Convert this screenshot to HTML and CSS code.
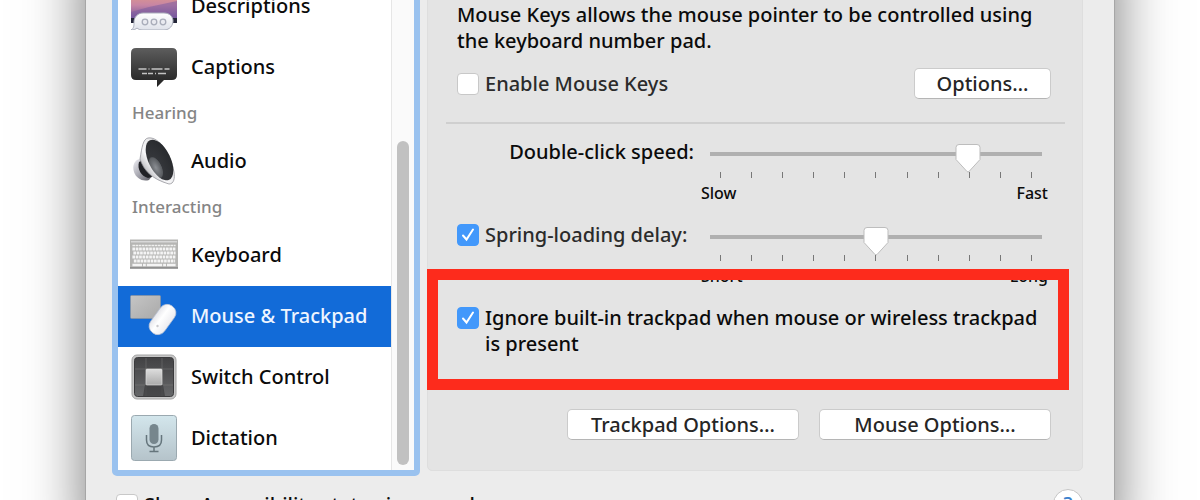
FILE: index.html
```html
<!DOCTYPE html>
<html lang="en">
<head>
<meta charset="utf-8">
<title>Accessibility</title>
<link rel="stylesheet" href="styles.css">
</head>
<body>
<main class="window">
  <div class="columns">
    <nav class="sidebar" aria-label="Accessibility features">
      <div class="list">
        <button class="item" type="button">
          <svg class="icon" viewBox="0 0 48 48" aria-hidden="true">
            <defs>
              <linearGradient id="sky" x1="0" y1="0" x2="0" y2="1"><stop offset="0" stop-color="#e9a07c"/><stop offset=".55" stop-color="#c886a4"/><stop offset="1" stop-color="#75569b"/></linearGradient>
              <linearGradient id="bubble" x1="0" y1="0" x2="0" y2="1"><stop offset="0" stop-color="#fff"/><stop offset="1" stop-color="#dfe2ea"/></linearGradient>
            </defs>
            <path d="M1 4h46v37H1z" fill="#242638"/>
            <path d="M1 7h46v29H1z" fill="url(#sky)"/>
            <path d="M1 30l18-5 28-6v17H1z" fill="#755aa0" opacity=".5"/>
            <path d="M13 32h21c6 0 9 4 9 8s-3 9-9 9H13c-3 0-5-1-6-2-1 1-3 2-6 2 3-2 3-4 3-8 0-5 4-9 9-9z" transform="translate(0 -1)" fill="url(#bubble)" stroke="#aaaebb"/>
            <g fill="#e9eaf0" stroke="#a9adba" stroke-width="1.3"><circle cx="15" cy="40" r="2.800"/><circle cx="24" cy="40" r="2.800"/><circle cx="33" cy="40" r="2.800"/></g>
          </svg>
          <span>Descriptions</span>
        </button>
        <button class="item" type="button">
          <svg class="icon" viewBox="0 0 48 48" aria-hidden="true">
            <defs><linearGradient id="dark" x1="0" y1="0" x2="0" y2="1"><stop offset="0" stop-color="#5d5d5d"/><stop offset="1" stop-color="#202020"/></linearGradient></defs>
            <path d="M6 5h36q5 0 5 5v22q0 5-5 5h-8l-7 7v-7H6q-5 0-5-5V10q0-5 5-5z" fill="url(#dark)"/>
            <path d="M8.500 26h8m2 0h1m2 0h11m2 0h5M12 30.500h5m1 0h5m2 0h1m2 0h8" stroke="#c4c4c4" stroke-width="1.400"/>
          </svg>
          <span>Captions</span>
        </button>
        <h2 class="group">Hearing</h2>
        <button class="item" type="button">
          <svg class="icon" viewBox="0 0 48 48" aria-hidden="true">
            <defs>
              <linearGradient id="rim" x1="0" y1="1" x2="1" y2="0"><stop offset="0" stop-color="#77777d"/><stop offset=".4" stop-color="#f8f8fa"/><stop offset="1" stop-color="#ccc"/></linearGradient>
              <linearGradient id="magnet" x1="0" y1="0" x2="1" y2="1"><stop offset="0" stop-color="#f0f0f5"/><stop offset=".5" stop-color="#a9a9b2"/><stop offset="1" stop-color="#55555d"/></linearGradient>
              <radialGradient id="cone" cx=".2" cy=".62" r=".8"><stop offset="0" stop-color="#8b8e93"/><stop offset=".3" stop-color="#5a5d61"/><stop offset=".34" stop-color="#34363a"/><stop offset="1" stop-color="#292b2e"/></radialGradient>
            </defs>
            <path d="M10 22C4 23 2 29 4 35s8 10 15 8l3-4z" fill="url(#magnet)"/>
            <path d="M9 25c-2 7 2 14 9 16l4-1-9-17z" fill="#202126"/>
            <path d="M18 1c-5 1-6 9-8 21 4 12 12 20 29 25 5 0 6-6 5-12C41 18 29-1 18 1z" fill="url(#rim)" stroke="#96969c" stroke-width=".8"/>
            <ellipse cx="29.500" cy="23" rx="11" ry="22" transform="rotate(-26 29.500 23)" fill="url(#cone)"/>
          </svg>
          <span>Audio</span>
        </button>
        <h2 class="group">Interacting</h2>
        <button class="item" type="button">
          <svg class="icon" viewBox="0 0 50 48" preserveAspectRatio="none" aria-hidden="true">
            <path d="M0 8.500h50V37H0z" fill="#b5b5b3"/>
            <path d="M0 37h50" stroke="#858585" stroke-width="1.500"/>
            <path d="M1 10h48v1.500H1z" fill="#d8d8d8"/>
            <path d="M2.500 14.500h45" stroke="#f0f0ee" stroke-width="1.600" stroke-dasharray="2.700 .6"/>
            <g stroke="#f4f4f4" stroke-width="2.800" stroke-dasharray="2.800 .7"><path d="M2.500 18h45M3.500 22h44M2.500 26h45M4 30h43"/></g>
            <path d="M2.500 34h10m1 0h3m1 0h16m1 0h3m1 0h9" stroke="#f4f4f4" stroke-width="2.600"/>
          </svg>
          <span>Keyboard</span>
        </button>
        <button class="item selected" type="button" aria-current="page">
          <svg class="icon" viewBox="0 0 48 48" aria-hidden="true">
            <defs>
              <linearGradient id="pad" x1="0" y1="0" x2="1" y2="1"><stop offset="0" stop-color="#c5c5c5"/><stop offset="1" stop-color="#a9a9a9"/></linearGradient>
              <linearGradient id="mouse" x1="0" y1="0" x2="1" y2="0"><stop offset="0" stop-color="#e6e6eb"/><stop offset=".4" stop-color="#fff"/><stop offset="1" stop-color="#ececf0"/></linearGradient>
            </defs>
            <rect x="0.500" y="3.500" width="30" height="23" rx="1" fill="url(#pad)" stroke="#8d9299" stroke-width=".6"/>
            <rect x="24" y="11" width="17" height="33" rx="8" transform="rotate(36 32.500 27.500)" fill="url(#mouse)" stroke="#bac3d5" stroke-width=".7"/>
            <circle cx="27.500" cy="34" r="1.200" fill="#c9c9cd"/>
          </svg>
          <span>Mouse &amp; Trackpad</span>
        </button>
        <button class="item" type="button">
          <svg class="icon" viewBox="0 0 48 48" aria-hidden="true">
            <defs>
              <linearGradient id="tile" x1="0" y1="0" x2="0" y2="1"><stop offset="0" stop-color="#424244"/><stop offset="1" stop-color="#666769"/></linearGradient>
              <linearGradient id="key" x1="0" y1="0" x2="0" y2="1"><stop offset="0" stop-color="#ddd"/><stop offset="1" stop-color="#aaa"/></linearGradient>
            </defs>
            <rect x="2" y="2" width="44" height="44" rx="5" fill="#c7c7c7" stroke="#a4a4a4"/>
            <rect x="4.500" y="4.500" width="39" height="39" rx="3" fill="url(#tile)" stroke="#3b3b3d"/>
            <path d="M16 5v38M32 5v38M5 16h38M5 32h38" stroke="#838385" stroke-width=".4"/>
            <path d="M15 32h18l2 11H13z" fill="#29292b" opacity=".5"/>
            <rect x="16" y="16" width="16" height="16" rx="1" fill="url(#key)" stroke="#e4e4e4" stroke-width=".6"/>
          </svg>
          <span>Switch Control</span>
        </button>
        <button class="item" type="button">
          <svg class="icon" viewBox="0 0 48 48" aria-hidden="true">
            <defs><linearGradient id="mist" x1="0" y1="0" x2="0" y2="1"><stop offset="0" stop-color="#d3e6ec"/><stop offset="1" stop-color="#b5c3ca"/></linearGradient></defs>
            <rect x="1.500" y="1.500" width="45" height="45" rx="3" fill="url(#mist)" stroke="#9ba9b0"/>
            <rect x="19.500" y="10" width="9" height="20" rx="4.500" fill="#76868d"/>
            <path d="M16.500 21v5q0 7 7.500 7t7.500-7v-5M24 33v4.500M19.500 37.500h9" fill="none" stroke="#65757c" stroke-width="1.500"/>
          </svg>
          <span>Dictation</span>
        </button>
      </div>
      <div class="scrollbar"><div class="scroll-thumb"></div></div>
    </nav>

    <section class="panel">
      <p class="intro">Mouse Keys allows the mouse pointer to be controlled using the keyboard number pad.</p>
      <div class="row">
        <label class="check soft"><input type="checkbox"><span>Enable Mouse Keys</span></label>
        <button class="button" type="button">Options…</button>
      </div>
      <hr class="divider">
      <div class="setting">
        <label class="setting-name" for="speed">Double-click speed:</label>
        <div class="slider">
          <input id="speed" type="range" min="0" max="10" value="8">
          <div class="ticks"><i></i><i></i><i></i><i></i><i></i><i></i><i></i><i></i><i></i><i></i><i></i></div>
          <div class="ends"><span>Slow</span><span>Fast</span></div>
        </div>
      </div>
      <div class="setting">
        <label class="check soft"><input type="checkbox" checked><span>Spring-loading delay:</span></label>
        <div class="slider">
          <input type="range" min="0" max="10" value="5" aria-label="Spring-loading delay">
          <div class="ticks"><i></i><i></i><i></i><i></i><i></i><i></i><i></i><i></i><i></i><i></i><i></i></div>
          <div class="ends"><span>Short</span><span>Long</span></div>
        </div>
      </div>
      <div class="ignore">
        <label class="check"><input type="checkbox" checked><span>Ignore built-in trackpad when mouse or wireless trackpad is&nbsp;present</span></label>
        <div class="highlight"></div>
      </div>
      <div class="actions">
        <button class="button large" type="button">Trackpad Options…</button>
        <button class="button large" type="button">Mouse Options…</button>
      </div>
    </section>
  </div>
  <footer class="footer">
    <label class="check"><input type="checkbox"><span>Show Accessibility status in menu bar</span></label>
    <button class="help" type="button" aria-label="Help">?</button>
  </footer>
</main>
</body>
</html>
```
FILE: styles.css
```css
* {
  box-sizing: border-box;
}

body {
  display: flow-root;
  height: 100vh;
  margin: 0;
  overflow: hidden;
  background: #fff;
  color: #0b0b0b;
  font: 500 20px/26px "Noto Sans", "Open Sans", sans-serif;
}

button,
input {
  margin: 0;
  color: inherit;
  font: inherit;
}

.window {
  margin: -61px 86px 0;
  padding: 31px 31px 30px 26px;
  background: #ececec;
  box-shadow: 0 0 0 1px #a6a6a6, 0 0 56px rgba(0, 0, 0, 0.55);
}

.columns {
  display: flex;
  gap: 7px;
}

.sidebar {
  display: flex;
  flex: 0 0 308px;
  border: 6px solid #9ac2ef;
  border-radius: 5px;
  background: #fff;
}

.list {
  flex: 1;
}

.item {
  display: flex;
  align-items: center;
  gap: 13px;
  width: 100%;
  height: 61px;
  padding: 0 0 1px 12px;
  border: 0;
  background: none;
  text-align: left;
  white-space: nowrap;
}

.item.selected {
  background: #126bd8;
  color: #eef5ff;
}

.icon {
  flex: none;
  width: 48px;
  height: 48px;
}

.group {
  height: 33px;
  margin: 0;
  padding: 2px 0 0 14px;
  color: #858585;
  font-size: 17px;
  font-weight: 500;
}

.scrollbar {
  display: flex;
  justify-content: center;
  width: 23px;
  padding: 165px 0 5px;
  border-left: 1px solid #e6e6e6;
  background: #fafafa;
}

.scroll-thumb {
  width: 12px;
  border-radius: 6px;
  background: #c1c1c1;
}

.panel {
  flex: 1;
  margin-bottom: 5px;
  padding: 31px 31px 30px 29px;
  border: 1px solid #dedede;
  border-radius: 5px;
  background: #e4e4e4;
}

.intro {
  margin: 0;
}

.row {
  display: flex;
  align-items: center;
  justify-content: space-between;
  margin-top: 14px;
}

.check {
  display: flex;
  align-items: flex-start;
  gap: 6px;
}

.soft {
  color: #2b2b2b;
}

.check input {
  flex: none;
  appearance: none;
  width: 22px;
  height: 22px;
  margin-top: 2px;
  border: 1px solid #c8c8c8;
  border-radius: 4px;
  background: #fff;
}

.check input:checked {
  border-color: #4298fb;
  background: #4298fb url("data:image/svg+xml,%3Csvg xmlns='http://www.w3.org/2000/svg' viewBox='0 0 20 20'%3E%3Cpath d='M5 10.500l3.500 4L15 4.500' fill='none' stroke='white' stroke-width='2' stroke-linecap='round'/%3E%3C/svg%3E");
}

.button {
  min-width: 137px;
  height: 31px;
  padding: 0 12px;
  border: 1px solid #cbcbcb;
  border-bottom-color: #b5b5b5;
  border-radius: 5px;
  background: #fff;
  color: #262626;
  line-height: 28px;
}

.button.large {
  min-width: 232px;
}

.divider {
  height: 2px;
  margin: 23px -14px 15px -11px;
  border: 0;
  background: #cfcfcf;
}

.setting {
  display: grid;
  grid-template-columns: 237px 1fr;
  align-items: start;
  gap: 16px;
  margin-bottom: 18px;
  padding-right: 9px;
}

.setting-name {
  text-align: right;
}

.slider {
  padding-top: 5px;
}

.slider input {
  display: block;
  appearance: none;
  width: 100%;
  height: 28px;
  background: linear-gradient(#b0b0b0, #b0b0b0) center 8px / 100% 4px no-repeat;
}

.slider input::-webkit-slider-thumb {
  appearance: none;
  width: 26px;
  height: 30px;
  background: url("data:image/svg+xml,%3Csvg xmlns='http://www.w3.org/2000/svg' viewBox='0 0 26 30'%3E%3Cpath d='M4 1.500h18q3 0 3 3v12L14 28.500q-1 1-2 0L1 16.500v-12q0-3 3-3z' fill='white' stroke='%23bdbdbd'/%3E%3C/svg%3E");
}

.ticks {
  display: flex;
  justify-content: space-between;
  height: 6px;
  padding: 0 10px;
}

.ticks i {
  width: 1px;
  background: #777;
}

.ends {
  display: flex;
  justify-content: space-between;
  margin: 4px -6px 0 -9px;
  font-size: 16px;
  line-height: 22px;
}

.ignore {
  position: relative;
}

.highlight {
  position: absolute;
  inset: -36px -18px -33px -30px;
  border: 11px solid #fd2b1c;
  pointer-events: none;
}

.actions {
  display: flex;
  justify-content: flex-end;
  gap: 20px;
  margin-top: 52px;
}

.footer {
  display: flex;
  align-items: flex-start;
  justify-content: space-between;
  padding: 13px 0 0 4px;
}

.footer .check {
  padding-top: 3px;
}

.help {
  width: 30px;
  height: 30px;
  padding: 0;
  border: 1px solid #c6c6c6;
  border-radius: 50%;
  background: #fff;
  color: #3c82ce;
}
```
